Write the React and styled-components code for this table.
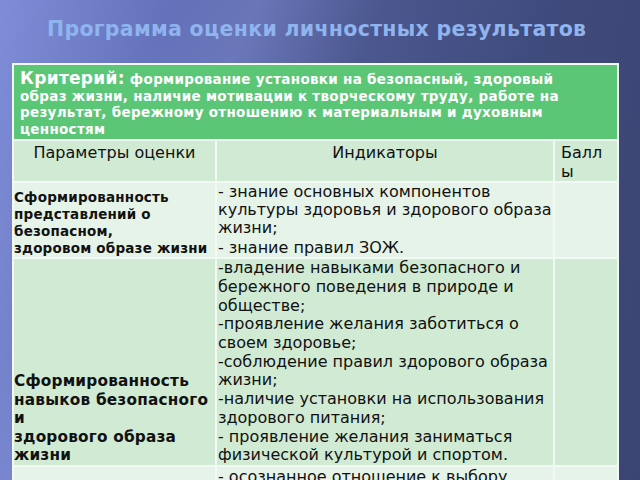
import styled, { createGlobalStyle } from "styled-components";

const GlobalStyle = createGlobalStyle`
  html, body {
    margin: 0;
    padding: 0;
    height: 100%;
    overflow: hidden;
  }
  body {
    font-family: "DejaVu Sans", "Liberation Sans", sans-serif;
  }
`;

const Slide = styled.div`
  width: 640px;
  height: 480px;
  overflow: hidden;
  background:
    linear-gradient(115deg, rgba(255, 255, 255, 0) 20%, rgba(180, 190, 255, 0.18) 30%, rgba(255, 255, 255, 0) 45%),
    linear-gradient(100deg, #7f8dd8 0%, #6270b8 25%, #4c5890 50%, #404b7d 75%, #3b4573 100%);
  display: flex;
  flex-direction: column;
  align-items: flex-start;
`;

const Title = styled.h1`
  flex-shrink: 0;
  margin: 0;
  width: 100%;
  padding: 16px 0 0 47px;
  height: 63px;
  box-sizing: border-box;
  font-size: 20.5px;
  font-weight: bold;
  color: #8fb4ee;
  line-height: 26px;
  letter-spacing: 0.3px;
  white-space: nowrap;
`;

const Table = styled.table`
  flex-shrink: 0;
  margin-left: 12px;
  width: 605px;
  border-collapse: collapse;
  table-layout: fixed;
`;

const Cell = styled.td`
  border: 2px solid #f2f8f3;
  padding: ${(p) => p.$pad || "2px 4px"};
  vertical-align: ${(p) => p.$valign || "top"};
  background: ${(p) => p.$bg || "#d0ead4"};
  color: #111;
  overflow: hidden;
`;

const CriteriaCell = styled(Cell)`
  background: #5cc677;
  color: #fff;
  height: 69px;
  padding: 5px 4px 0 6px;
  font-size: 13.5px;
  font-weight: bold;
  line-height: 16.5px;
  letter-spacing: 0.3px;
  white-space: nowrap;
`;

const Lead = styled.span`
  font-size: 17px;
`;

const HeadCell = styled(Cell)`
  height: 38px;
  font-size: 16px;
  line-height: 19px;
  text-align: ${(p) => p.$align || "left"};
  padding: 2px 6px 0 6px;
`;

const NameCell = styled(Cell)`
  font-size: ${(p) => p.$size || "13.5px"};
  font-weight: bold;
  line-height: ${(p) => p.$lh || "17px"};
  padding: 0;
  letter-spacing: 0.2px;
  white-space: nowrap;
`;

const TextCell = styled(Cell)`
  font-size: 16px;
  line-height: ${(p) => p.$lh || "19px"};
  padding: 0 1px;
`;

const Line = styled.div`
  margin-top: ${(p) => p.$gap || "0px"};
`;

const rowOne = "#e6f3e8";

export default function App() {
  return (
    <Slide>
      <GlobalStyle />
      <Title>Программа оценки личностных результатов</Title>
      <Table>
        <colgroup>
          <col style={{ width: "203px" }} />
          <col style={{ width: "338px" }} />
          <col style={{ width: "64px" }} />
        </colgroup>
        <tbody>
          <tr>
            <CriteriaCell colSpan={3}>
              <Lead>Критерий:</Lead> формирование установки на безопасный, здоровый
              <br />
              образ жизни, наличие мотивации к творческому труду, работе на
              <br />
              результат, бережному отношению к материальным и духовным
              <br />
              ценностям
            </CriteriaCell>
          </tr>
          <tr>
            <HeadCell $align="center">Параметры оценки</HeadCell>
            <HeadCell $align="center">Индикаторы</HeadCell>
            <HeadCell>Балл ы</HeadCell>
          </tr>
          <tr>
            <NameCell $bg={rowOne} $valign="bottom" style={{ height: "73px" }}>
              Сформированность
              <br />
              представлений о
              <br />
              безопасном,
              <br />
              здоровом образе жизни
            </NameCell>
            <TextCell $bg={rowOne} $lh="17.8px">
              <Line>- знание основных компонентов культуры здоровья и здорового образа жизни;</Line>
              <Line $gap="3px">- знание правил ЗОЖ.</Line>
            </TextCell>
            <Cell $bg={rowOne} />
          </tr>
          <tr>
            <NameCell $valign="bottom" $size="15.3px" $lh="18.6px" style={{ height: "205px" }}>
              Сформированность
              <br />
              навыков безопасного
              <br />
              и
              <br />
              здорового образа
              <br />
              жизни
            </NameCell>
            <TextCell $lh="18.7px">
              <Line>-владение навыками безопасного и бережного поведения в природе и обществе;</Line>
              <Line>-проявление желания заботиться о своем здоровье;</Line>
              <Line>-соблюдение правил здорового образа жизни;</Line>
              <Line>-наличие установки на использования здорового питания;</Line>
              <Line>- проявление желания заниматься физической культурой и спортом.</Line>
            </TextCell>
            <Cell />
          </tr>
          <tr>
            <NameCell $bg={rowOne} style={{ height: "40px" }} />
            <TextCell $bg={rowOne}>
              <Line>- осознанное отношение к выбору</Line>
            </TextCell>
            <Cell $bg={rowOne} />
          </tr>
        </tbody>
      </Table>
    </Slide>
  );
}
